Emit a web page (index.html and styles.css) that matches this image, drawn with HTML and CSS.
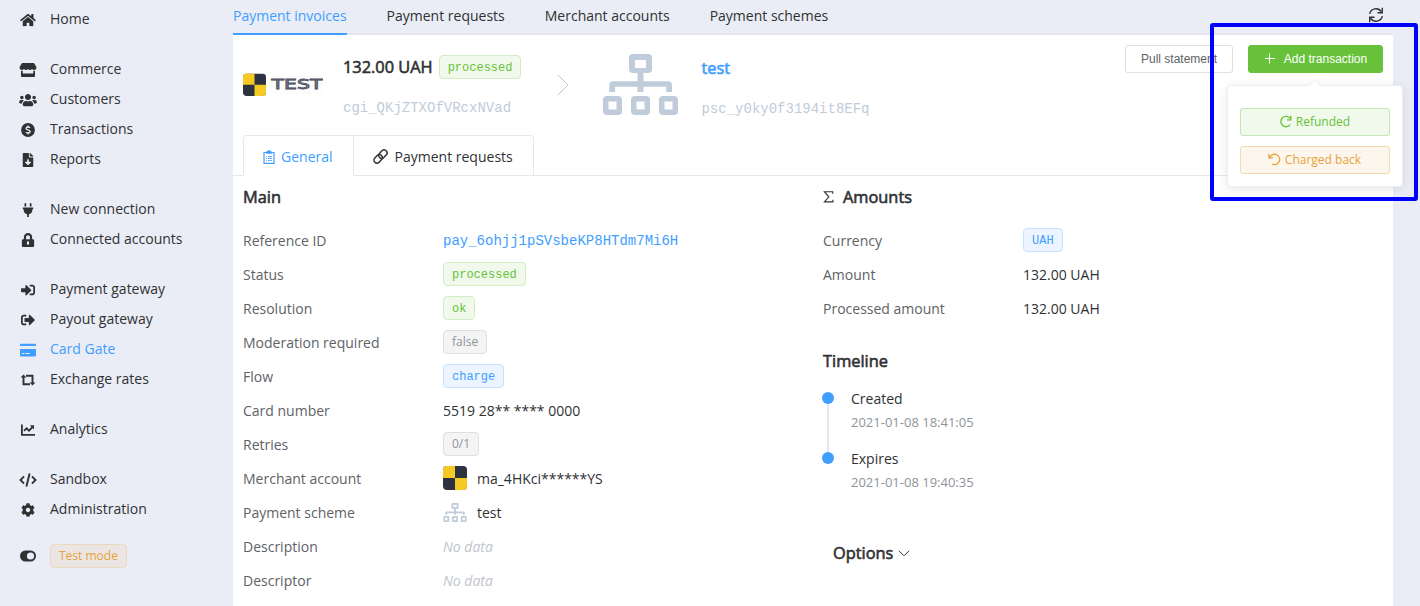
FILE: index.html
```html
<!DOCTYPE html>
<html lang="en">
<head>
<meta charset="utf-8">
<title>Payment invoice</title>
<link rel="stylesheet" href="styles.css">
</head>
<body>
<svg class="defs" width="0" height="0">
  <symbol id="sitemap" viewBox="0 0 75 61">
    <path fill-rule="evenodd" d="M30 0h15a4 4 0 0 1 4 4v11a4 4 0 0 1-4 4h-4.500v8.200H65a4 4 0 0 1 4 4V38h-5.800v-5.200H40.500V38h-6v-5.200H12V38H6.200v-6.800a4 4 0 0 1 4-4h24.300V19H30a4 4 0 0 1-4-4V4a4 4 0 0 1 4-4zm2 6v8h11V6z"/>
    <path fill-rule="evenodd" d="M4 42h11a4 4 0 0 1 4 4v11a4 4 0 0 1-4 4H4a4 4 0 0 1-4-4V46a4 4 0 0 1 4-4zm1.500 5.500v8h8v-8zM32 42h11a4 4 0 0 1 4 4v11a4 4 0 0 1-4 4H32a4 4 0 0 1-4-4V46a4 4 0 0 1 4-4zm1.500 5.500v8h8v-8zM60 42h11a4 4 0 0 1 4 4v11a4 4 0 0 1-4 4H60a4 4 0 0 1-4-4V46a4 4 0 0 1 4-4zm1.500 5.500v8h8v-8z"/>
  </symbol>
  <symbol id="checker" viewBox="0 0 24 24">
    <rect width="24" height="24" rx="4" fill="#2d3241"/>
    <path d="M4 0h8v12H0V4a4 4 0 0 1 4-4zM12 12h12v8a4 4 0 0 1-4 4h-8z" fill="#f5cb23"/>
  </symbol>
</svg>
<div class="app">
  <nav class="sidebar">
    <div class="group">
      <a class="item"><svg class="icon" width="16" height="14" viewBox="0 0 576 512"><path d="M280.370 148.260L96 300.110V464a16 16 0 0 0 16 16l112.060-.290a16 16 0 0 0 15.920-16V368a16 16 0 0 1 16-16h64a16 16 0 0 1 16 16v95.640a16 16 0 0 0 16 16.050L464 480a16 16 0 0 0 16-16V300L295.670 148.260a12.190 12.190 0 0 0-15.300 0zM571.600 251.470L488 182.560V44.050a12 12 0 0 0-12-12h-56a12 12 0 0 0-12 12v72.610L318.470 43a48 48 0 0 0-61 0L4.340 251.470a12 12 0 0 0-1.600 16.900l25.500 31A12 12 0 0 0 45.150 301l235.220-193.740a12.190 12.190 0 0 1 15.300 0L530.900 301a12 12 0 0 0 16.900-1.600l25.500-31a12 12 0 0 0-1.700-16.930z"/></svg>Home</a>
    </div>
    <div class="group">
      <a class="item"><svg class="icon" width="17" height="14" viewBox="0 0 616 512"><path d="M602 118.600L537.100 15C531.300 5.700 521 0 510 0H106C95 0 84.700 5.700 78.900 15L14 118.600c-33.500 53.500-3.800 127.900 58.800 136.400 4.500.6 9.100.9 13.700.9 29.600 0 55.800-13 73.800-33.100 18 20.100 44.300 33.100 73.800 33.100 29.600 0 55.800-13 73.800-33.100 18 20.100 44.300 33.100 73.800 33.100 29.600 0 55.800-13 73.800-33.100 18.100 20.100 44.300 33.100 73.800 33.100 4.700 0 9.200-.3 13.700-.9 62.800-8.400 92.600-82.800 59-136.400zM529.500 288c-10 0-19.900-1.500-29.500-3.800V384H116v-99.800c-9.600 2.200-19.500 3.800-29.500 3.800-6 0-12.100-.4-18-1.200-5.600-.8-11.100-2.100-16.400-3.600V480c0 17.700 14.300 32 32 32h448c17.700 0 32-14.300 32-32V283.200c-5.400 1.600-10.800 2.900-16.400 3.600-6.100.8-12.100 1.200-18.200 1.200z"/></svg>Commerce</a>
      <a class="item"><svg class="icon" width="17.500" height="14" viewBox="0 0 640 512"><path d="M96 224c35.300 0 64-28.700 64-64s-28.700-64-64-64-64 28.700-64 64 28.700 64 64 64zm448 0c35.300 0 64-28.700 64-64s-28.700-64-64-64-64 28.700-64 64 28.700 64 64 64zm32 32h-64c-17.600 0-33.500 7.100-45.100 18.600 40.300 22.100 68.900 62 75.100 109.400h66c17.700 0 32-14.300 32-32v-32c0-35.300-28.700-64-64-64zm-256 0c61.900 0 112-50.100 112-112S381.900 32 320 32 208 82.100 208 144s50.100 112 112 112zm76.800 32h-8.300c-20.800 10-43.900 16-68.500 16s-47.600-6-68.500-16h-8.300C179.600 288 128 339.600 128 403.200V432c0 26.500 21.500 48 48 48h288c26.500 0 48-21.500 48-48v-28.800c0-63.600-51.600-115.200-115.200-115.200zm-223.700-13.400C161.500 263.100 145.600 256 128 256H64c-35.300 0-64 28.700-64 64v32c0 17.700 14.300 32 32 32h65.900c6.300-47.400 34.900-87.300 75.200-109.400z"/></svg>Customers</a>
      <a class="item"><svg class="icon" width="14" height="14" viewBox="0 0 14 14"><circle cx="7" cy="7" r="6.900"/><path d="M9 4.800C8.500 4.200 7.800 4 7 4 5.900 4 5 4.500 5 5.400c0 2 4.100 1.100 4.100 3.200C9.100 9.500 8.200 10 7 10c-.9 0-1.700-.3-2.200-.9M7 2.600V4M7 10v1.500" fill="none" stroke="#eaedf6" stroke-width="1.300"/></svg>Transactions</a>
      <a class="item"><svg class="icon" width="11" height="14" viewBox="0 0 384 512"><path d="M224 136V0H24C10.700 0 0 10.700 0 24v464c0 13.300 10.700 24 24 24h336c13.300 0 24-10.700 24-24V160H248c-13.200 0-24-10.800-24-24zm76.450 211.360l-96.420 95.700c-6.650 6.610-17.390 6.610-24.040 0l-96.420-95.700C73.420 337.290 80.540 320 94.820 320H160v-80c0-8.840 7.160-16 16-16h32c8.840 0 16 7.160 16 16v80h65.180c14.280 0 21.400 17.290 11.270 27.360zM377 105L279.100 7c-4.500-4.500-10.600-7-17-7H256v128h128v-6.100c0-6.300-2.500-12.400-7-16.900z"/></svg>Reports</a>
    </div>
    <div class="group">
      <a class="item"><svg class="icon" width="10.500" height="14" viewBox="0 0 384 512"><path d="M320 32a32 32 0 0 0-64 0v96h64zm48 128H16A16 16 0 0 0 0 176v32a16 16 0 0 0 16 16h16v32a160.070 160.070 0 0 0 128 156.800V512h64v-99.200A160.070 160.070 0 0 0 352 256v-32h16a16 16 0 0 0 16-16v-32a16 16 0 0 0-16-16zM128 32a32 32 0 0 0-64 0v96h64z"/></svg>New connection</a>
      <a class="item"><svg class="icon" width="12.250" height="14" viewBox="0 0 448 512"><path d="M400 224h-24v-72C376 68.200 307.800 0 224 0S72 68.200 72 152v72H48c-26.500 0-48 21.500-48 48v192c0 26.500 21.500 48 48 48h352c26.500 0 48-21.500 48-48V272c0-26.500-21.500-48-48-48zM264 392c0 22.100-17.900 40-40 40s-40-17.900-40-40v-48c0-22.100 17.900-40 40-40s40 17.900 40 40v48zm32-168H152v-72c0-39.700 32.300-72 72-72s72 32.300 72 72v72z"/></svg>Connected accounts</a>
    </div>
    <div class="group">
      <a class="item"><svg class="icon" width="14" height="14" viewBox="0 0 512 512"><path d="M416 448h-84c-6.600 0-12-5.400-12-12v-40c0-6.600 5.400-12 12-12h84c17.700 0 32-14.300 32-32V160c0-17.700-14.300-32-32-32h-84c-6.600 0-12-5.400-12-12V76c0-6.600 5.400-12 12-12h84c53 0 96 43 96 96v192c0 53-43 96-96 96zm-47-201L201 79c-15-15-41-4.500-41 17v96H24c-13.300 0-24 10.700-24 24v96c0 13.300 10.700 24 24 24h136v96c0 21.500 26 32 41 17l168-168c9.300-9.400 9.300-24.600 0-34z"/></svg>Payment gateway</a>
      <a class="item"><svg class="icon" width="14" height="14" viewBox="0 0 512 512"><path d="M497 273L329 441c-15 15-41 4.500-41-17v-96H152c-13.300 0-24-10.700-24-24v-96c0-13.300 10.700-24 24-24h136V88c0-21.400 25.900-32 41-17l168 168c9.300 9.400 9.300 24.600 0 34zM192 436v-40c0-6.600-5.400-12-12-12H96c-17.700 0-32-14.300-32-32V160c0-17.700 14.300-32 32-32h84c6.600 0 12-5.400 12-12V76c0-6.600-5.400-12-12-12H96c-53 0-96 43-96 96v192c0 53 43 96 96 96h84c6.600 0 12-5.400 12-12z"/></svg>Payout gateway</a>
      <a class="item current"><svg class="icon" width="16" height="14" viewBox="0 0 16 14"><path fill-rule="evenodd" d="M1.300.8h13.400c.8 0 1.300.5 1.300 1.300V3H0v-.9C0 1.300.5.800 1.300.8zM0 6h16v6.200c0 .8-.5 1.300-1.300 1.300H1.300C.5 13.500 0 13 0 12.200zm2 4v1.100h2.400V10zm3.400 0v1.100h4.400V10z"/></svg>Card Gate</a>
      <a class="item"><svg class="icon" width="16" height="14" viewBox="0 0 16 14"><path d="M3.500 3.500v7.700H10M6 2.800h6.500V10" fill="none" stroke="currentColor" stroke-width="1.900"/><path d="M.6 4.500L3.500 1.400l2.900 3.100zM9.600 9.500h5.800l-2.900 3.100z"/></svg>Exchange rates</a>
    </div>
    <div class="group">
      <a class="item"><svg class="icon" width="14" height="14" viewBox="0 0 14 14"><path d="M.9 1.500v10.300H14M3 7.800l2.600-2.500 2.400 2.400L11.500 4.200" fill="none" stroke="currentColor" stroke-width="1.800"/><path d="M8.800 2.200H13v4.300z"/></svg>Analytics</a>
    </div>
    <div class="group">
      <a class="item"><svg class="icon" width="18" height="14" viewBox="0 0 18 14"><path d="M5 3.400L1.500 7 5 10.600M13 3.400L16.500 7 13 10.600M10.600.6L7.400 13.400" fill="none" stroke="currentColor" stroke-width="1.900"/></svg>Sandbox</a>
      <a class="item"><svg class="icon" width="14" height="14" viewBox="0 0 512 512"><path d="M487.400 315.700l-42.600-24.600c4.300-23.200 4.300-47 0-70.200l42.600-24.600c4.900-2.800 7.100-8.600 5.500-14-11.100-35.600-30-67.800-54.700-94.600-3.800-4.100-10-5.100-14.800-2.300L380.800 110c-17.900-15.400-38.500-27.300-60.800-35.100V25.800c0-5.600-3.900-10.500-9.400-11.700-36.700-8.200-74.300-7.800-109.200 0-5.500 1.200-9.400 6.100-9.400 11.700V75c-22.200 7.900-42.800 19.800-60.800 35.100L88.700 85.500c-4.900-2.800-11-1.900-14.800 2.300-24.700 26.700-43.600 58.900-54.700 94.600-1.700 5.400.6 11.200 5.500 14L67.300 221c-4.300 23.200-4.300 47 0 70.200l-42.600 24.600c-4.900 2.800-7.100 8.600-5.500 14 11.100 35.600 30 67.800 54.700 94.600 3.800 4.100 10 5.100 14.800 2.300l42.600-24.600c17.900 15.400 38.500 27.300 60.800 35.100v49.200c0 5.600 3.900 10.500 9.400 11.700 36.700 8.200 74.300 7.800 109.200 0 5.500-1.200 9.400-6.100 9.400-11.700v-49.200c22.200-7.900 42.800-19.800 60.800-35.100l42.600 24.600c4.900 2.800 11 1.900 14.800-2.300 24.700-26.700 43.600-58.900 54.700-94.600 1.500-5.500-.7-11.300-5.600-14.100zM256 336c-44.100 0-80-35.900-80-80s35.900-80 80-80 80 35.900 80 80-35.900 80-80 80z"/></svg>Administration</a>
    </div>
    <div class="item mode"><svg class="icon" width="16" height="12" viewBox="0 0 16 12"><path fill-rule="evenodd" d="M5.500.5h5a5.500 5.500 0 0 1 0 11h-5a5.500 5.500 0 0 1 0-11zm5 1.900a3.600 3.600 0 1 0 0 7.200 3.600 3.600 0 0 0 0-7.200z"/></svg><span class="tag warning">Test mode</span></div>
  </nav>

  <main class="main">
    <div class="topbar">
      <div class="toptabs"><a class="active">Payment invoices</a><a>Payment requests</a><a>Merchant accounts</a><a>Payment schemes</a></div>
      <svg class="refresh" width="16" height="16" viewBox="0 0 16 16"><path d="M1.700 6.800A6.300 6.300 0 0 1 13.200 4.700M14.300 9.200A6.300 6.300 0 0 1 2.800 11.300M14.300.8v5H9.500M1.700 15.200v-5h4.800" fill="none" stroke="currentColor" stroke-width="1.400"/></svg>
    </div>

    <section class="card">
      <header class="head">
        <svg class="brand" width="80" height="24" viewBox="0 0 80 24">
          <rect x="28" y="3" width="52" height="18" fill="#fcfcfc"/>
          <svg width="23" height="22.500" y="0.500" viewBox="0 0 24 24" preserveAspectRatio="none"><use href="#checker"/></svg>
          <text class="brand-text" x="28.500" y="16" textLength="51" lengthAdjust="spacingAndGlyphs">TEST</text>
        </svg>
        <div class="info">
          <div class="line"><span class="title">132.00 UAH</span><span class="tag success mono">processed</span></div>
          <div class="ident">cgi_QKjZTXOfVRcxNVad</div>
        </div>
        <svg class="next" width="12" height="22" viewBox="0 0 12 22"><path d="M.6.600L11 11 .6 21.400" fill="none" stroke="#c0c4cc" stroke-width="1"/></svg>
        <svg class="scheme" width="75" height="61"><use href="#sitemap"/></svg>
        <div class="info scheme-info">
          <div class="line"><a class="title link">test</a></div>
          <div class="ident">psc_y0ky0f3194it8EFq</div>
        </div>
        <div class="actions">
          <button class="btn">Pull statement</button>
          <div class="add">
            <button class="btn primary"><svg width="12" height="12" viewBox="0 0 12 12"><path d="M1 5.500h10M5.500 .5v10" stroke="#fff" stroke-width="1"/></svg>Add transaction</button>
            <div class="popover">
              <button class="btn soft-green"><svg width="13" height="13" viewBox="0 0 13 13"><path d="M11.300 9.500A5.200 5.200 0 1 1 11.200 3.400M11.800.8V4.800H7.900" fill="none" stroke="currentColor" stroke-width="1.300"/></svg>Refunded</button>
              <button class="btn soft-orange"><svg width="13" height="13" viewBox="0 0 13 13"><path d="M4.300 11.200A5.200 5.200 0 1 0 1.700 4.300M1 .8V4.800H5" fill="none" stroke="currentColor" stroke-width="1.300"/></svg>Charged back</button>
            </div>
          </div>
        </div>
      </header>

      <div class="tabs">
        <a class="tab on"><svg width="12" height="14" viewBox="0 0 12 14"><path d="M1 2.500h10v10.800H1z" fill="none" stroke="currentColor" stroke-width="1.200"/><path d="M3.200 1.300h1.600a1.200 1.200 0 0 1 2.400 0h1.600v2.500H3.200z"/><path d="M3 6.500h1M5 6.500h4M3 8.500h1M5 8.500h4M3 10.500h1M5 10.500h4" stroke="currentColor" stroke-width=".8"/></svg>General</a>
        <a class="tab"><svg width="15" height="15" viewBox="0 0 15 15"><g fill="none" stroke="currentColor" stroke-width="1.500" transform="rotate(-45 7.500 7.500)"><rect x="-.5" y="4.500" width="9.300" height="6" rx="3"/><rect x="6.200" y="4.500" width="9.300" height="6" rx="3"/></g></svg>Payment requests</a>
      </div>

      <div class="columns">
        <div class="col left">
          <h3 class="title">Main</h3>
          <div class="row"><span class="label">Reference ID</span><a class="code">pay_6ohjj1pSVsbeKP8HTdm7Mi6H</a></div>
          <div class="row"><span class="label">Status</span><span class="tag success mono">processed</span></div>
          <div class="row"><span class="label">Resolution</span><span class="tag success mono">ok</span></div>
          <div class="row"><span class="label">Moderation required</span><span class="tag info-tag">false</span></div>
          <div class="row"><span class="label">Flow</span><span class="tag blue mono">charge</span></div>
          <div class="row"><span class="label">Card number</span><span>5519 28** **** 0000</span></div>
          <div class="row"><span class="label">Retries</span><span class="tag info-tag">0/1</span></div>
          <div class="row"><span class="label">Merchant account</span><svg class="thumb" width="24" height="24"><use href="#checker"/></svg><span>ma_4HKci******YS</span></div>
          <div class="row"><span class="label">Payment scheme</span><svg class="thumb pale" width="24" height="19"><use href="#sitemap"/></svg><span>test</span></div>
          <div class="row"><span class="label">Description</span><i class="none">No data</i></div>
          <div class="row"><span class="label">Descriptor</span><i class="none">No data</i></div>
        </div>
        <div class="col">
          <h3 class="title"><svg class="sigma" width="12" height="14" viewBox="0 0 12 14"><path d="M9.700 3.800V1.700H1.400L5.800 6.800l-4.400 5.100h8.500V9.800" fill="none" stroke="currentColor" stroke-width="1.100"/></svg>Amounts</h3>
          <div class="row"><span class="label">Currency</span><span class="tag blue mono">UAH</span></div>
          <div class="row"><span class="label">Amount</span><span>132.00 UAH</span></div>
          <div class="row"><span class="label">Processed amount</span><span>132.00 UAH</span></div>
          <h3 class="title timeline-title">Timeline</h3>
          <ul class="timeline">
            <li><div>Created</div><time>2021-01-08 18:41:05</time></li>
            <li><div>Expires</div><time>2021-01-08 19:40:35</time></li>
          </ul>
          <h3 class="title options">Options<svg width="12" height="7" viewBox="0 0 12 7"><path d="M1 .800l5 5 5-5" fill="none" stroke="#303133" stroke-width="1"/></svg></h3>
        </div>
      </div>
    </section>
  </main>
  <div class="highlight"></div>
</div>
</body>
</html>
```
FILE: styles.css
```css
* { box-sizing: border-box; }
body {
  margin: 0;
  height: 606px;
  overflow: hidden;
  background: #eaedf6;
  color: #303133;
  font: 14px/20px "Open Sans", sans-serif;
}
svg { flex: none; fill: currentColor; }
.defs { position: absolute; }
.app { position: relative; display: flex; height: 606px; overflow: hidden; }

.sidebar { width: 233px; padding: 4px 0 0 18px; flex: none; }
.group { margin-bottom: 20px; }
.item { display: flex; align-items: center; height: 30px; }
.item .icon { width: 20px; margin: 2px 12px 0 0; }
.item.current { color: #409eff; }
.item.mode { height: 24px; }
.item.mode .icon { margin-top: 0; }

.tag {
  display: inline-flex;
  align-items: center;
  height: 24px;
  padding: 0 8px;
  border: 1px solid;
  border-radius: 4px;
  font-size: 12px;
  line-height: 22px;
}
.mono { padding-top: 2px; font-family: "Liberation Mono", monospace; }
.success { color: #67c23a; background: #f0f9eb; border-color: #d1edc4; }
.blue { color: #409eff; background: #ecf5ff; border-color: #c6e2ff; }
.info-tag { color: #909399; background: #f4f4f5; border-color: #dedfe0; }
.warning { color: #e6a23c; background: #ebe6e3; border-color: #ebd9bd; }

.main { width: 1160px; flex: none; }
.topbar {
  display: flex;
  justify-content: space-between;
  height: 35px;
  border-bottom: 2px solid #e4e7ed;
  padding-right: 9px;
}
.toptabs { display: flex; gap: 40px; }
.toptabs a { height: 35px; line-height: 32px; }
.toptabs .active { color: #409eff; border-bottom: 2px solid #409eff; }
.refresh { margin-top: 7px; }

.card { height: 571px; background: #fff; }
.head { display: flex; height: 100px; padding: 0 10px; }
.brand { margin: 38px 20px 0 0; }
.brand-text {
  font: 400 14.500px "DejaVu Sans", sans-serif;
  fill: #868b96;
  stroke: #4a4f5c;
  stroke-width: .8px;
}
.title {
  margin: 0;
  font-size: 16.380px;
  font-weight: 400;
  -webkit-text-stroke: .6px currentColor;
}
.info { padding-top: 20px; }
.line { display: flex; align-items: center; gap: 6px; height: 24px; }
.ident { margin-top: 19px; color: #c0ccda; font-family: "Liberation Mono", monospace; }
.next { margin: 39px 34px 0 36px; }
.scheme { margin: 19px 23px 0 0; color: #c0ccda; }
.scheme-info { padding-top: 21px; }
.link { color: #409eff; }
.actions { display: flex; gap: 15px; margin: 10px 0 0 auto; }
.btn {
  display: flex;
  align-items: center;
  justify-content: center;
  height: 28px;
  padding: 0 15px;
  border: 1px solid #dcdfe6;
  border-radius: 3px;
  background: #fff;
  color: #606266;
  font: 12px "Liberation Sans", sans-serif;
  white-space: nowrap;
}
.primary { width: 135px; gap: 8px; background: #67c23a; border-color: #67c23a; color: #fff; }
.add { position: relative; }
.popover {
  position: absolute;
  top: 40px;
  left: -21px;
  z-index: 2;
  width: 176px;
  height: 102px;
  display: flex;
  flex-direction: column;
  gap: 10px;
  padding: 22px 12px 12px;
  border: 1px solid #ebeef5;
  border-radius: 4px;
  background: #fff;
  box-shadow: 0 2px 12px rgba(0, 0, 0, .1);
}
.popover::before {
  content: "";
  position: absolute;
  top: -5px;
  left: 82px;
  width: 9px;
  height: 9px;
  background: #fff;
  border: 1px solid #ebeef5;
  border-right: 0;
  border-bottom: 0;
  transform: rotate(45deg);
}
.popover .btn { gap: 4px; padding: 0 16px 2px 15px; font-family: "Open Sans", sans-serif; }
.soft-green { color: #67c23a; background: #f0f9eb; border-color: #c2e7b0; }
.soft-orange { color: #e6a23c; background: #fdf6ec; border-color: #f5dab1; }

.tabs { display: flex; height: 41px; padding-left: 10px; border-bottom: 1px solid #e4e7ed; }
.tab {
  display: flex;
  align-items: center;
  gap: 6px;
  height: 41px;
  padding: 2px 20px 0 19px;
  border: 1px solid #e4e7ed;
  border-left: 0;
  border-top-right-radius: 4px;
}
.tab.on {
  border-left: 1px solid #e4e7ed;
  border-radius: 4px 0 0 0;
  border-bottom-color: #fff;
  color: #409eff;
}
.tab:last-child { height: 40px; border-bottom: 0; padding-right: 20px; gap: 7px; }

.columns { display: flex; padding-left: 10px; }
.left { width: 580px; }
h3.title { display: flex; align-items: center; height: 42px; margin-bottom: 6px; }
.row { display: flex; align-items: center; height: 34px; }
.row .tag { margin-bottom: 2px; }
.label { width: 200px; color: #606266; }
.code { color: #409eff; font-family: "Liberation Mono", monospace; }
.thumb { margin: 0 10px 2px 0; }
.pale { color: #c0ccda; margin-bottom: 2px; }
.none { color: #c0c4cc; }
.sigma { margin-right: 8px; }
h3.timeline-title { margin: 14px 0 7px; }
.timeline { list-style: none; margin: 0; padding: 0; }
.timeline li { position: relative; height: 60px; padding-left: 28px; }
.timeline li::before {
  content: "";
  position: absolute;
  left: -1px;
  top: 3px;
  width: 12px;
  height: 12px;
  border-radius: 50%;
  background: #409eff;
}
.timeline li:first-child::after {
  content: "";
  position: absolute;
  left: 4px;
  top: 15px;
  width: 2px;
  height: 48px;
  background: #e4e7ed;
}
.timeline time { display: block; margin-top: 3px; font-size: 13px; color: #909399; }
h3.options { margin: 23px 0 0 10px; gap: 5px; }

.highlight {
  position: absolute;
  z-index: 5;
  left: 1210px;
  top: 23px;
  width: 208px;
  height: 178px;
  border: 4px solid #00f;
  border-radius: 3px;
}
```
